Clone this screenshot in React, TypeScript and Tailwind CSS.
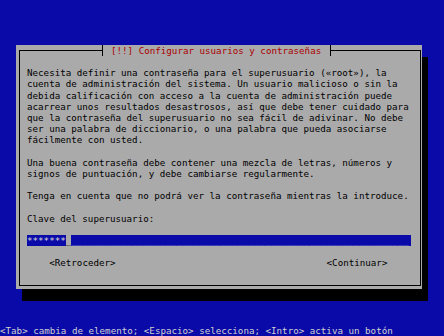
const mono = "font-['DejaVu_Sans_Mono','Liberation_Mono',monospace]";

const bodyLines = [
  "Necesita definir una contraseña para el superusuario («root»), la",
  "cuenta de administración del sistema. Un usuario malicioso o sin la",
  "debida calificación con acceso a la cuenta de administración puede",
  "acarrear unos resultados desastrosos, así que debe tener cuidado para",
  "que la contraseña del superusuario no sea fácil de adivinar. No debe",
  "ser una palabra de diccionario, o una palabra que pueda asociarse",
  "fácilmente con usted.",
  "",
  "Una buena contraseña debe contener una mezcla de letras, números y",
  "signos de puntuación, y debe cambiarse regularmente.",
  "",
  "Tenga en cuenta que no podrá ver la contraseña mientras la introduce.",
  "",
  "Clave del superusuario:",
  "",
];

function Row({ children }: { children?: React.ReactNode }) {
  return <div className="h-[11.2px] leading-[11.2px] whitespace-pre">{children}</div>;
}

export default function App() {
  return (
    <div
      className={`w-[444px] h-[336px] bg-[#0a0aa8] flex flex-col overflow-hidden text-[9.2px] ${mono}`}
    >
      <div className="pt-[45px] pl-[16px]">
        {/* dialog window */}
        <div className="w-[406px] h-[244px] bg-[#aaaaaa] shadow-[6px_12px_0_0_#000] pt-[5px] pl-[3px]">
          <div className="relative w-[402px] h-[236px] border border-black pt-[16.2px] pl-[7px] text-black">
            {/* title over the top border */}
            <div className="absolute left-[82px] -top-[6px] h-[11px] border-x border-black bg-[#aaaaaa] pl-[8px] pr-[9px] leading-[11px] text-[#aa0000] whitespace-pre">
              [!!] Configurar usuarios y contraseñas
            </div>

            {bodyLines.map((l, i) => (
              <Row key={i}>{l}</Row>
            ))}

            {/* password entry */}
            <div className="flex h-[11.2px] leading-[11.2px] w-[384px]">
              <span className="bg-[#0a0aa8] text-[#d8d8d8] whitespace-pre">*******</span>
              <span className="w-[5.55px] text-black">_</span>
              <span className="flex-1 bg-[#0a0aa8] text-[#9a9ad0] whitespace-pre">
                {"_".repeat(61)}
              </span>
            </div>

            <Row />

            <div className="flex h-[11.2px] leading-[11.2px] whitespace-pre">
              <span className="pl-[22.2px]">&lt;Retroceder&gt;</span>
              <span className="ml-[211px]">&lt;Continuar&gt;</span>
            </div>
          </div>
        </div>
      </div>

      <div className="mt-auto h-[11.2px] leading-[11.2px] text-[#d0d0d0] whitespace-pre">
        &lt;Tab&gt; cambia de elemento; &lt;Espacio&gt; selecciona; &lt;Intro&gt; activa un botón
      </div>
    </div>
  );
}
